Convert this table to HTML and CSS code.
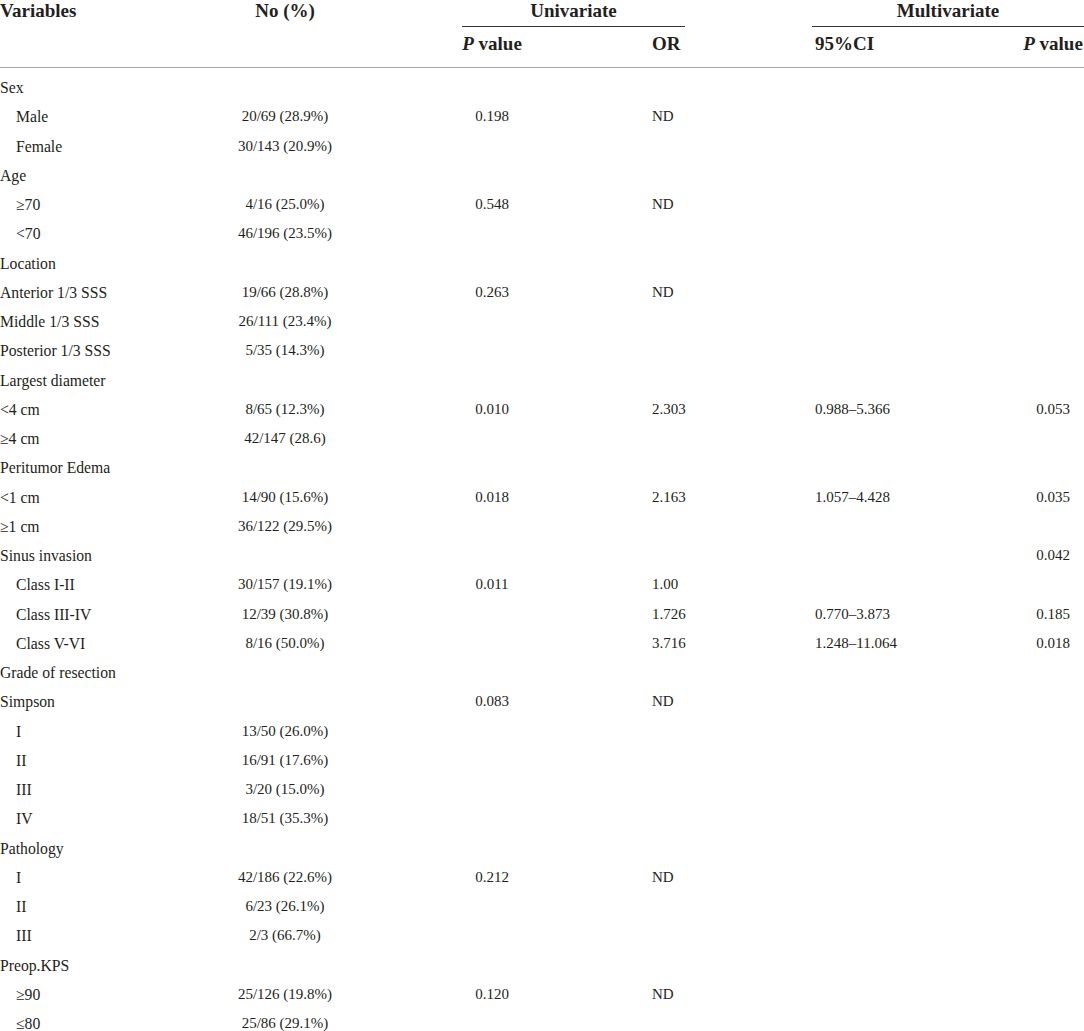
FILE: index.html
```html
<!DOCTYPE html>
<html lang="en">
<head>
    <meta charset="UTF-8">
    <meta name="viewport" content="width=device-width, initial-scale=1.0">
    <title>Risk factors for recurrence</title>
    <link rel="stylesheet" href="styles.css">
</head>
<body>
    <table class="stats">
        <colgroup>
            <col class="col-var">
            <col class="col-n">
            <col class="col-up">
            <col class="col-or">
            <col class="col-ci">
            <col class="col-mp">
        </colgroup>
        <thead>
            <tr class="head-top">
                <th class="left">Variables</th>
                <th>No (%)</th>
                <th colspan="2"><div class="group uni">Univariate</div></th>
                <th colspan="2"><div class="group multi">Multivariate</div></th>
            </tr>
            <tr class="head-sub">
                <th></th>
                <th></th>
                <th><i>P</i> value</th>
                <th class="or">OR</th>
                <th class="left">95%CI</th>
                <th><i>P</i> value</th>
            </tr>
        </thead>
        <tbody>
            <tr><td>Sex</td><td></td><td></td><td></td><td></td><td></td></tr>
            <tr><td class="sub">Male</td><td>20/69 (28.9%)</td><td>0.198</td><td class="or">ND</td><td></td><td></td></tr>
            <tr><td class="sub">Female</td><td>30/143 (20.9%)</td><td></td><td></td><td></td><td></td></tr>
            <tr><td>Age</td><td></td><td></td><td></td><td></td><td></td></tr>
            <tr><td class="sub">&ge;70</td><td>4/16 (25.0%)</td><td>0.548</td><td class="or">ND</td><td></td><td></td></tr>
            <tr><td class="sub">&lt;70</td><td>46/196 (23.5%)</td><td></td><td></td><td></td><td></td></tr>
            <tr><td>Location</td><td></td><td></td><td></td><td></td><td></td></tr>
            <tr><td>Anterior 1/3 SSS</td><td>19/66 (28.8%)</td><td>0.263</td><td class="or">ND</td><td></td><td></td></tr>
            <tr><td>Middle 1/3 SSS</td><td>26/111 (23.4%)</td><td></td><td></td><td></td><td></td></tr>
            <tr><td>Posterior 1/3 SSS</td><td>5/35 (14.3%)</td><td></td><td></td><td></td><td></td></tr>
            <tr><td>Largest diameter</td><td></td><td></td><td></td><td></td><td></td></tr>
            <tr><td>&lt;4 cm</td><td>8/65 (12.3%)</td><td>0.010</td><td class="or">2.303</td><td class="left">0.988&ndash;5.366</td><td>0.053</td></tr>
            <tr><td>&ge;4 cm</td><td>42/147 (28.6)</td><td></td><td></td><td></td><td></td></tr>
            <tr><td>Peritumor Edema</td><td></td><td></td><td></td><td></td><td></td></tr>
            <tr><td>&lt;1 cm</td><td>14/90 (15.6%)</td><td>0.018</td><td class="or">2.163</td><td class="left">1.057&ndash;4.428</td><td>0.035</td></tr>
            <tr><td>&ge;1 cm</td><td>36/122 (29.5%)</td><td></td><td></td><td></td><td></td></tr>
            <tr><td>Sinus invasion</td><td></td><td></td><td></td><td></td><td>0.042</td></tr>
            <tr><td class="sub">Class I-II</td><td>30/157 (19.1%)</td><td>0.011</td><td class="or">1.00</td><td></td><td></td></tr>
            <tr><td class="sub">Class III-IV</td><td>12/39 (30.8%)</td><td></td><td class="or">1.726</td><td class="left">0.770&ndash;3.873</td><td>0.185</td></tr>
            <tr><td class="sub">Class V-VI</td><td>8/16 (50.0%)</td><td></td><td class="or">3.716</td><td class="left">1.248&ndash;11.064</td><td>0.018</td></tr>
            <tr><td>Grade of resection</td><td></td><td></td><td></td><td></td><td></td></tr>
            <tr><td>Simpson</td><td></td><td>0.083</td><td class="or">ND</td><td></td><td></td></tr>
            <tr><td class="sub">I</td><td>13/50 (26.0%)</td><td></td><td></td><td></td><td></td></tr>
            <tr><td class="sub">II</td><td>16/91 (17.6%)</td><td></td><td></td><td></td><td></td></tr>
            <tr><td class="sub">III</td><td>3/20 (15.0%)</td><td></td><td></td><td></td><td></td></tr>
            <tr><td class="sub">IV</td><td>18/51 (35.3%)</td><td></td><td></td><td></td><td></td></tr>
            <tr><td>Pathology</td><td></td><td></td><td></td><td></td><td></td></tr>
            <tr><td class="sub">I</td><td>42/186 (22.6%)</td><td>0.212</td><td class="or">ND</td><td></td><td></td></tr>
            <tr><td class="sub">II</td><td>6/23 (26.1%)</td><td></td><td></td><td></td><td></td></tr>
            <tr><td class="sub">III</td><td>2/3 (66.7%)</td><td></td><td></td><td></td><td></td></tr>
            <tr><td>Preop.KPS</td><td></td><td></td><td></td><td></td><td></td></tr>
            <tr><td class="sub">&ge;90</td><td>25/126 (19.8%)</td><td>0.120</td><td class="or">ND</td><td></td><td></td></tr>
            <tr><td class="sub">&le;80</td><td>25/86 (29.1%)</td><td></td><td></td><td></td><td></td></tr>
        </tbody>
    </table>
</body>
</html>
```

FILE: styles.css
```css
body {
    margin: 0;
    background: #fff;
    color: #231f20;
    font-family: "Liberation Serif", "Times New Roman", serif;
}

.stats {
    width: 1084px;
    border-collapse: collapse;
    table-layout: fixed;
}

/* column widths */
.col-var { width: 230px; }
.col-n { width: 110px; }
.col-up { width: 304px; }
.col-or { width: 171px; }
.col-ci { width: 207px; }
.col-mp { width: 62px; }

.stats th {
    padding: 0;
    font-size: 19px;
    font-weight: bold;
    line-height: 22px;
    text-align: center;
    vertical-align: top;
    white-space: nowrap;
}

.stats .left {
    text-align: left;
}

.head-top th {
    height: 27px;
}

.group {
    border-bottom: 1px solid #333;
    padding-bottom: 4px;
}

.group.uni {
    margin: 0 130px 0 122px;
}

.group.multi {
    margin: 0 0 0 -3px;
}

.head-sub th {
    padding-top: 6px;
    height: 34px;
    border-bottom: 1px solid #a8a8a8;
}

.stats .or {
    text-align: left;
    padding-left: 8px;
}

.stats td {
    padding: 0;
    height: 29.25px;
    font-size: 15px;
    line-height: 29.25px;
    text-align: center;
    vertical-align: top;
    white-space: nowrap;
}

/* first column is set a touch wider, like the source face */
.stats td:first-child {
    text-align: left;
    font-size: 15.7px;
}

.stats td.sub {
    padding-left: 16px;
}

tbody tr:first-child td {
    padding-top: 5px;
}
```
